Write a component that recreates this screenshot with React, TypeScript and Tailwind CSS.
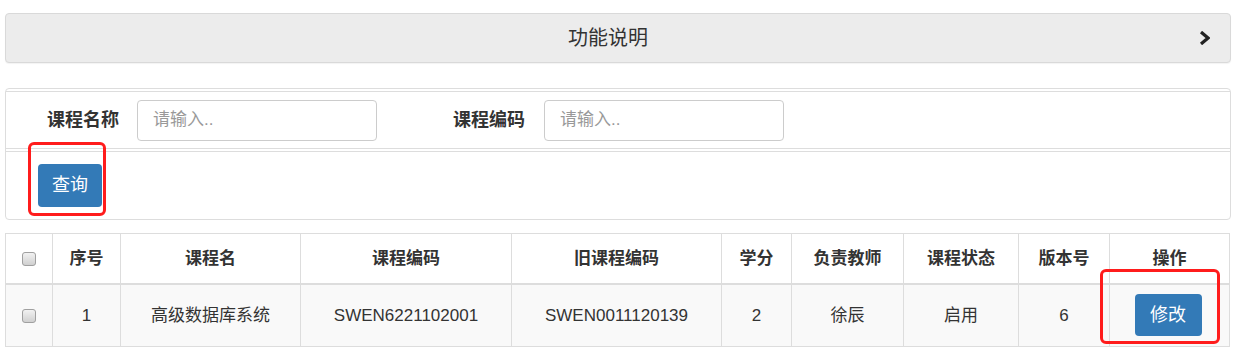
import React from 'react';

const font = { fontFamily: '"Liberation Sans", "Noto Sans CJK SC", sans-serif' };

const Check = () => (
  <span className="inline-block w-[14px] h-[14px] rounded-[3px] border border-[#a0a0a0] bg-gradient-to-b from-[#f2f2f2] to-[#d0d0d0] align-middle" />
);

const headers = ['序号', '课程名', '课程编码', '旧课程编码', '学分', '负责教师', '课程状态', '版本号', '操作'];
const widths = [47, 68, 180, 211, 210, 70, 112, 115, 91, 120];
const row = ['1', '高级数据库系统', 'SWEN6221102001', 'SWEN0011120139', '2', '徐辰', '启用', '6'];

const App = () => {
  return (
    <div className="w-[1237px] h-[353px] bg-white pt-[13px] pl-[5px] pr-[6px] text-[#333] overflow-hidden" style={font}>
      {/* 功能说明 bar */}
      <div className="h-[50px] flex items-center border border-[#d9d9d9] rounded-[4px] bg-[#ececec] shadow-[0_1px_1px_rgba(0,0,0,0.05)]">
        <div className="flex-1" />
        <span className="text-[20px] leading-none">功能说明</span>
        <div className="flex-1 flex justify-end pr-[20px]">
          <svg width="11" height="14" viewBox="0 0 11 14">
            <path d="M2 1 L9 7 L2 13" fill="none" stroke="#222" strokeWidth="3.2" />
          </svg>
        </div>
      </div>

      {/* search panel */}
      <div className="relative mt-[25px] border border-[#ddd] rounded-[4px] pt-[2px] pb-[12px]">
        <div className="h-[58px] flex items-center border-t border-b border-[#ddd]">
          <label className="w-[113px] text-right font-bold text-[18px]">课程名称</label>
          <div className="ml-[18px] w-[240px] h-[41px] border border-[#ccc] rounded-[4px] flex items-center pl-[15px] text-[17px] text-[#999]">
            请输入..
          </div>
          <label className="ml-[35px] w-[113px] text-right font-bold text-[18px]">课程编码</label>
          <div className="ml-[19px] w-[240px] h-[41px] border border-[#ccc] rounded-[4px] flex items-center pl-[15px] text-[17px] text-[#999]">
            请输入..
          </div>
        </div>
        <div className="mt-[2px] border-t border-[#ddd] pt-[12px] pl-[32px]">
          <button className="w-[64px] h-[43px] rounded-[4px] bg-[#337ab7] text-white text-[18px]">查询</button>
        </div>
        <div className="absolute left-[22px] top-[53px] w-[78px] h-[74px] border-[3px] border-[#ff1c1c] rounded-[6px]" />
      </div>

      {/* table */}
      <div className="relative mt-[13px] w-[1224px]">
        <table className="table-fixed border-collapse w-[1224px] text-[17px]">
          <colgroup>
            {widths.map((w, i) => (
              <col key={i} style={{ width: w }} />
            ))}
          </colgroup>
          <thead>
            <tr className="h-[50px]">
              <th className="border border-[#ddd] border-b-2 text-center">
                <Check />
              </th>
              {headers.map((h) => (
                <th key={h} className="border border-[#ddd] border-b-2 font-bold text-center">
                  {h}
                </th>
              ))}
            </tr>
          </thead>
          <tbody>
            <tr className="h-[63px] bg-[#f9f9f9]">
              <td className="border border-[#ddd] text-center">
                <Check />
              </td>
              {row.map((c, i) => (
                <td key={i} className="border border-[#ddd] text-center">
                  {c}
                </td>
              ))}
              <td className="border border-[#ddd] text-center">
                <button className="w-[67px] h-[42px] rounded-[4px] bg-[#337ab7] text-white text-[18px] mr-[3px]">修改</button>
              </td>
            </tr>
          </tbody>
        </table>
        <div className="absolute left-[1095px] top-[36px] w-[120px] h-[75px] border-[3px] border-[#ff1c1c] rounded-[6px]" />
      </div>
    </div>
  );
};

export default App;
